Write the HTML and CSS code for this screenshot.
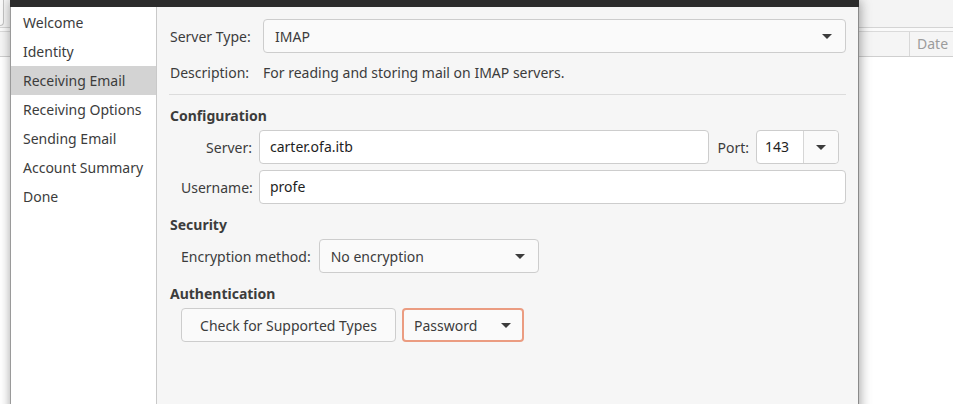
FILE: index.html
```html
<!DOCTYPE html>
<html>
<head>
<meta charset="utf-8">
<link rel="stylesheet" href="styles.css">
</head>
<body>
<div class="desktop">
  <div class="app">
    <div class="app-toolbar"><div class="app-btn"></div></div>
    <div class="app-spacer"></div>
    <div class="app-thead">
      <div class="app-col"></div>
      <div class="app-col app-col-date">Date</div>
    </div>
    <div class="app-list"></div>
  </div>

  <div class="dialog">
    <div class="dialog-titlebar"></div>
    <div class="dialog-body">
      <nav class="sidebar">
        <div class="side-item">Welcome</div>
        <div class="side-item">Identity</div>
        <div class="side-item is-selected">Receiving Email</div>
        <div class="side-item">Receiving Options</div>
        <div class="side-item">Sending Email</div>
        <div class="side-item">Account Summary</div>
        <div class="side-item">Done</div>
      </nav>

      <main class="content">
        <div class="top-grid">
          <div class="lbl">Server Type:</div>
          <div class="combo combo-wide"><span>IMAP</span><span class="arrow"></span></div>
          <div class="lbl desc-row">Description:</div>
          <div class="desc-row">For reading and storing mail on IMAP servers.</div>
        </div>

        <div class="separator"></div>

        <div class="heading heading-config">Configuration</div>
        <div class="form-row row-server">
          <div class="lbl lbl-right">Server:</div>
          <div class="entry entry-server">carter.ofa.itb</div>
          <div class="lbl">Port:</div>
          <div class="spin"><span class="spin-val">143</span><span class="spin-btn"><span class="arrow"></span></span></div>
        </div>
        <div class="form-row row-user">
          <div class="lbl lbl-right">Username:</div>
          <div class="entry entry-user">profe</div>
        </div>

        <div class="heading heading-sec">Security</div>
        <div class="form-row row-enc">
          <div class="lbl">Encryption method:</div>
          <div class="combo combo-enc"><span>No encryption</span><span class="arrow"></span></div>
        </div>

        <div class="heading heading-sec">Authentication</div>
        <div class="form-row row-auth">
          <div class="button">Check for Supported Types</div>
          <div class="combo combo-pass"><span>Password</span><span class="arrow"></span></div>
        </div>
      </main>
    </div>
  </div>
</div>
</body>
</html>
```
FILE: styles.css
```css
* { box-sizing: border-box; }

html, body {
  margin: 0;
  padding: 0;
  width: 953px;
  height: 404px;
  overflow: hidden;
  background: #ffffff;
  font-family: "Noto Sans", "DejaVu Sans", sans-serif;
  font-size: 14px;
  color: #3c3c3c;
}

.desktop {
  position: relative;
  width: 953px;
  height: 404px;
  overflow: hidden;
}

/* background application */
.app {
  display: flex;
  flex-direction: column;
  height: 100%;
}
.app-toolbar {
  height: 28px;
  background: #f4f4f4;
  border-bottom: 1px solid #d4d4d4;
  position: relative;
}
.app-btn {
  width: 4px;
  height: 26px;
  border: 1px solid #c4c4c4;
  border-left: none;
  border-top: none;
  border-radius: 0 0 4px 0;
  background: #f9f9f9;
}
.app-spacer {
  height: 3px;
  background: #fafafa;
}
.app-thead {
  height: 26px;
  display: flex;
  background: #f5f5f5;
  border-top: 1px solid #dadada;
  border-bottom: 1px solid #cfcfcf;
}
.app-col { width: 909px; }
.app-col-date {
  flex: 1;
  border-left: 1px solid #d8d8d8;
  color: #9c9c9c;
  padding-left: 7px;
  line-height: 24px;
}
.app-list { flex: 1; background: #ffffff; }

/* dialog window */
.dialog {
  position: absolute;
  left: 10px;
  top: 0;
  width: 849px;
  height: 430px;
  background: #f6f6f6;
  border-left: 1px solid #9a9a9a;
  border-right: 1px solid #8a8a8a;
  box-shadow: 0 0 10px rgba(0, 0, 0, 0.28), 3px 0 12px rgba(0, 0, 0, 0.12);
  display: flex;
  flex-direction: column;
}
.dialog-titlebar {
  height: 7px;
  background: #2c2c2c;
  margin: 0 -1px;
}
.dialog-body {
  flex: 1;
  display: flex;
}

.sidebar {
  width: 146px;
  background: #ffffff;
  border-right: 1px solid #c9c9c9;
  padding-top: 1px;
}
.side-item {
  height: 29px;
  line-height: 29px;
  padding-left: 12px;
  color: #3c3c3c;
  white-space: nowrap;
}
.side-item.is-selected { background: #d3d3d3; }

.content {
  flex: 1;
  padding: 12px 12px 0 13px;
}

.lbl { white-space: nowrap; color: #3c3c3c; }
.lbl-right { width: 71px; text-align: right; }

.top-grid {
  display: grid;
  grid-template-columns: 93px 1fr;
  grid-template-rows: 34px 24px;
  row-gap: 8px;
  align-items: center;
}
.desc-row { line-height: 24px; }

.combo {
  height: 34px;
  border: 1px solid #cdcdcd;
  border-radius: 4px;
  background: #fafafa;
  display: flex;
  align-items: center;
  justify-content: space-between;
  padding: 0 12px 0 11px;
  color: #3c3c3c;
}
.arrow {
  width: 0;
  height: 0;
  border-left: 5px solid transparent;
  border-right: 5px solid transparent;
  border-top: 5px solid #3c3c3c;
  margin-top: 1px;
}
.combo-wide .arrow { margin-right: 1px; }

.separator {
  height: 1px;
  background: #dcdcdc;
  margin: 9px 0 0 -1px;
}

.heading {
  font-weight: bold;
  line-height: 20px;
  color: #3c3c3c;
}
.heading-config { margin-top: 11px; }
.heading-sec { margin-top: 11px; }

.form-row {
  display: flex;
  align-items: center;
  gap: 7px;
  margin-left: 11px;
  margin-top: 4px;
  height: 34px;
}
.row-user { margin-top: 6px; }
.row-server { margin-right: 7px; }
.row-enc { gap: 8px; }
.row-auth { gap: 6px; }

.entry {
  flex: 1;
  height: 34px;
  border: 1px solid #cdcdcd;
  border-radius: 4px;
  background: #ffffff;
  padding-left: 10px;
  line-height: 32px;
  color: #1e1e1e;
}
.entry-server { margin-right: 1px; }

.spin {
  width: 83px;
  height: 34px;
  border: 1px solid #cdcdcd;
  border-radius: 4px;
  background: #ffffff;
  display: flex;
}
.spin-val {
  width: 47px;
  padding-left: 8px;
  line-height: 32px;
  color: #1e1e1e;
  border-right: 1px solid #d6d6d6;
}
.spin-btn {
  flex: 1;
  display: flex;
  align-items: center;
  justify-content: center;
  background: #fafafa;
  border-radius: 0 4px 4px 0;
}

.combo-enc { width: 220px; }
.combo-enc .arrow { margin-right: 1px; }

.button {
  height: 34px;
  width: 215px;
  border: 1px solid #cdcdcd;
  border-radius: 4px;
  background: #fafafa;
  display: flex;
  align-items: center;
  justify-content: center;
  color: #3c3c3c;
}
.combo-pass {
  width: 122px;
  border: 2px solid #eb9c81;
  padding: 0 11px 0 10px;
}
```
